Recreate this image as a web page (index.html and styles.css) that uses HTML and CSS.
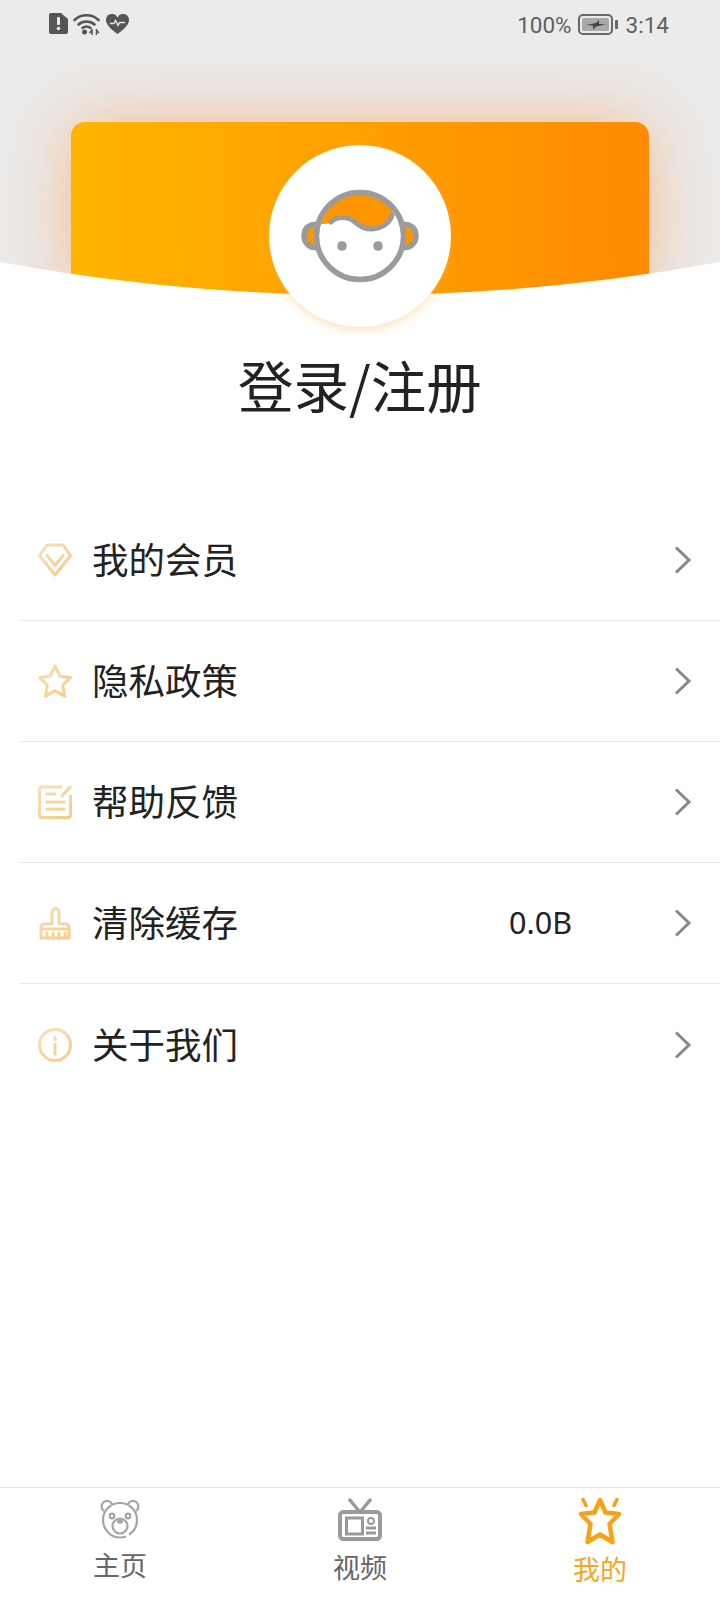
FILE: index.html
```html
<!DOCTYPE html>
<html lang="zh-CN">
<head>
    <meta charset="UTF-8">
    <meta name="viewport" content="width=device-width, initial-scale=1.0">
    <title>我的</title>
    <link rel="stylesheet" href="styles.css">
</head>
<body>
<svg class="defs"><defs><linearGradient id="gold" gradientUnits="userSpaceOnUse" x1="0" y1="0" x2="30" y2="34"><stop offset="0" stop-color="#f5e0bd"/><stop offset="1" stop-color="#f7cd85"/></linearGradient></defs></svg>
<div class="page">

    <div class="top">
        <div class="hero">
            <div class="status-bar">
                <div class="status-left">
                    <svg class="ic-sim" viewBox="0 0 19 21"><path d="M2 0h10l7 6v13a2 2 0 0 1-2 2H2a2 2 0 0 1-2-2V2a2 2 0 0 1 2-2z" fill="#555"/><rect x="8" y="4" width="3" height="8" rx="1" fill="#ebebeb"/><circle cx="9.5" cy="15.500" r="1.800" fill="#ebebeb"/></svg>
                    <svg class="ic-wifi" viewBox="0 0 27 22"><g fill="none" stroke="#555" stroke-width="2.600" stroke-linecap="round"><path d="M1.500 7C8 .6 19 .6 25.500 7"/><path d="M5.500 11.500c4.500-4 11.500-4 16 0"/><path d="M9.500 15c2.300-1.700 5.700-1.700 8 0"/></g><circle cx="11.500" cy="19" r="2.500" fill="#555"/><path d="M19 16v6M23.500 16v6M16.500 20l2.500-3M26 20l-2.500-3" stroke="#555" stroke-width="1.500" fill="none"/></svg>
                    <svg class="ic-heart" viewBox="0 0 23 20"><path d="M11.500 20C5 15 0 11 0 6a6 6 0 0 1 11.500-2.400A6 6 0 0 1 23 6c0 5-5 9-11.500 14z" fill="#555"/><path d="M4 9.500h4l1.500-3 2.500 5 1.500-3h5.500" fill="none" stroke="#ebebeb" stroke-width="1.300"/></svg>
                </div>
                <div class="status-right">
                    <span class="status-text">100%</span>
                    <svg class="ic-battery" viewBox="0 0 40 21"><rect x="1" y="1" width="33" height="19" rx="4" fill="none" stroke="#666" stroke-width="2"/><rect x="4" y="4" width="27" height="13" rx="1.500" fill="#a9a9a9"/><path d="M8 11l10-2 3-3v4l7 .5-10 2-3 3v-4z" fill="#444"/><rect x="37" y="6" width="3" height="9" rx="1" fill="#666"/></svg>
                    <span class="status-text">3:14</span>
                </div>
            </div>
            <div class="card"></div>
            <!-- white curve over the bottom of the card -->
            <svg class="hero-curve" viewBox="0 0 720 40" preserveAspectRatio="none"><path d="M0 2Q360 68 720 2V40H0z" fill="#fff"/></svg>
        </div>
        <div class="avatar">
            <svg class="ic-face" viewBox="0 0 120 100">
                <path d="M19 37a13 13 0 0 0 0 26z" fill="#ff9500"/>
                <path d="M101 37a13 13 0 0 1 0 26z" fill="#ff9500"/>
                <path d="M17 38.500c-9-1-13 5-13 11.500s5 12.500 13 11.500M103 38.500c9-1 13 5 13 11.500s-5 12.500-13 11.500" fill="none" stroke="#9b9b9b" stroke-width="5.500"/>
                <path d="M21 38C27 18 44 8 60 8c14 0 27 7 34 20-2 9-12 15-24 15-10 0-14-8-20-10-7-2-14-1-19 3-3 2-6 2-10 2z" fill="#ff9500"/>
                <circle cx="60" cy="50" r="43.500" fill="none" stroke="#9b9b9b" stroke-width="5.500"/>
                <path d="M31 36c5-5 13-5 19-3 6 2 10 10 20 10s20-5 22-14" fill="none" stroke="#9b9b9b" stroke-width="5" stroke-linecap="round"/>
                <circle cx="42" cy="60" r="4.800" fill="#9b9b9b"/>
                <circle cx="78" cy="60" r="4.800" fill="#9b9b9b"/>
            </svg>
        </div>
    </div>

    <h1 class="title">登录/注册</h1>

    <ul class="menu">
        <li class="menu-row">
            <svg class="menu-icon" viewBox="0 0 34 34" stroke="url(#gold)"><path d="M9 2h16l7.500 10.500L17 32 1.500 12.500z"/><path d="M9 12.500l8 10 8-10"/></svg>
            <span class="menu-label">我的会员</span>
            <svg class="chevron" viewBox="0 0 18 28"><path d="M2 1.500l13 12.500L2 26.500"/></svg>
        </li>
        <li class="menu-row">
            <svg class="menu-icon" viewBox="0 0 34 34" stroke="url(#gold)"><path d="M17 2l4.800 10.200 10.700 1.300-7.800 7.600 2 11L17 26.600 7.300 32.100l2-11-7.800-7.600 10.700-1.300z"/></svg>
            <span class="menu-label">隐私政策</span>
            <svg class="chevron" viewBox="0 0 18 28"><path d="M2 1.500l13 12.500L2 26.500"/></svg>
        </li>
        <li class="menu-row">
            <svg class="menu-icon" viewBox="0 0 34 34" stroke="url(#gold)"><path d="M23 2H3.500a2 2 0 0 0-2 2v26a2.500 2.500 0 0 0 2.500 2.500h26a2.500 2.500 0 0 0 2.500-2.500V11"/><path d="M9 9h8M9 17h17M9 24h17M32 2l-8 9"/></svg>
            <span class="menu-label">帮助反馈</span>
            <svg class="chevron" viewBox="0 0 18 28"><path d="M2 1.500l13 12.500L2 26.500"/></svg>
        </li>
        <li class="menu-row">
            <svg class="menu-icon" viewBox="0 0 34 34" stroke="url(#gold)"><path d="M3 32V21a3 3 0 0 1 3-3h6a2 2 0 0 0 2-2V6a3.500 3.500 0 0 1 7 0v10a2 2 0 0 0 2 2h5a3 3 0 0 1 3 3v11z"/><path d="M3 23h28M9 27v5M15 27v5M21 27v5M27 27v5"/></svg>
            <span class="menu-label">清除缓存</span>
            <span class="menu-value">0.0B</span>
            <svg class="chevron" viewBox="0 0 18 28"><path d="M2 1.500l13 12.500L2 26.500"/></svg>
        </li>
        <li class="menu-row">
            <svg class="menu-icon" viewBox="0 0 34 34" stroke="url(#gold)"><circle cx="17" cy="17" r="15.500"/><path d="M17 16v10M17 9.500v2"/></svg>
            <span class="menu-label">关于我们</span>
            <svg class="chevron" viewBox="0 0 18 28"><path d="M2 1.500l13 12.500L2 26.500"/></svg>
        </li>
    </ul>

    <nav class="tabbar">
        <div class="tab">
            <svg class="tab-icon bear" viewBox="0 0 40 40"><g fill="none" stroke="#a5a5a5" stroke-width="2.200"><path d="M4 12A5.500 5.500 0 1 1 12 5M36 12A5.500 5.500 0 1 0 28 5"/><path d="M29 35.500c5-3 8-8.500 8-14.500C37 11 29 4 20 4S3 11 3 21s8 17.500 17 17.500c2 0 4-.3 6-1"/><circle cx="12" cy="17" r="2.300"/><circle cx="28" cy="17" r="2.300"/><ellipse cx="20" cy="27" rx="7.500" ry="7.500"/></g><ellipse cx="20" cy="22.500" rx="3" ry="2.200" fill="#a5a5a5"/></svg>
            <span class="tab-label">主页</span>
        </div>
        <div class="tab">
            <svg class="tab-icon tv" viewBox="0 0 44 43"><path d="M11 1l10 12M33 1L23 13" fill="none" stroke="#9a9a9a" stroke-width="3.500"/><rect x="2" y="14" width="40" height="27" rx="3.500" fill="none" stroke="#9a9a9a" stroke-width="4"/><rect x="8.500" y="20" width="16" height="16" fill="none" stroke="#9a9a9a" stroke-width="3"/><circle cx="33" cy="23" r="3" fill="none" stroke="#9a9a9a" stroke-width="2"/><path d="M28 30h10M28 35h10" stroke="#9a9a9a" stroke-width="3"/></svg>
            <span class="tab-label">视频</span>
        </div>
        <div class="tab active">
            <svg class="tab-icon star" viewBox="0 0 44 48"><path d="M22 3l5.500 12.500 13.500 1.500-9.500 10 3 18L22 37.500 9.500 45l3-18L3 17l13.500-1.500z" fill="none" stroke="#f6a214" stroke-width="4.500" stroke-linejoin="round"/><path d="M5 2.500l3 6M39 2.500l-3 6" stroke="#f6a214" stroke-width="3.500" stroke-linecap="round"/></svg>
            <span class="tab-label">我的</span>
        </div>
    </nav>
</div>
</body>
</html>
```

FILE: styles.css
```css
* {
    box-sizing: border-box;
}

body {
    margin: 0;
    background-color: #fff;
    color: #222;
    font-family: "Noto Sans CJK SC", "Noto Sans", sans-serif;
}

.defs {
    position: absolute;
    width: 0;
    height: 0;
}

.page {
    display: flex;
    flex-direction: column;
    width: 720px;
    height: 1600px;
    overflow: hidden;
}

/* top area */
.top {
    position: relative;
    flex: none;
}

.hero {
    position: relative;
    display: flex;
    flex-direction: column;
    height: 300px;
    background-color: #ebebeb;
    overflow: hidden;
}

.status-bar {
    flex: none;
    display: flex;
    justify-content: space-between;
    align-items: flex-start;
    height: 122px;
    padding: 13px 51px 0 49px;
}

.status-left, .status-right {
    display: flex;
    align-items: flex-start;
}

.ic-sim {
    width: 19px;
    height: 21px;
    margin-right: 5px;
}

.ic-wifi {
    width: 27px;
    height: 22px;
    margin-right: 6px;
}

.ic-heart {
    width: 23px;
    height: 20px;
    margin-top: 1px;
}

.status-text {
    font-family: Roboto, sans-serif;
    font-size: 22.5px;
    line-height: 24px;
    color: #5f5f5f;
}

.ic-battery {
    width: 40px;
    height: 21px;
    margin: 1px 8px 0 6px;
}

.card {
    flex: 1;
    margin: 0 71px;
    border-radius: 14px 14px 0 0;
    background: linear-gradient(90deg, #ffb500, #ff8a00);
    box-shadow: 0 0 70px rgba(255, 125, 20, 0.42);
}

.hero-curve {
    position: absolute;
    left: 0;
    bottom: 0;
    width: 720px;
    height: 40px;
}

.avatar {
    position: absolute;
    left: 269px;
    top: 145px;
    display: flex;
    justify-content: center;
    align-items: center;
    width: 182px;
    height: 182px;
    border-radius: 50%;
    background-color: #fff;
    box-shadow: 0 3px 8px rgba(255, 170, 60, 0.35);
}

.ic-face {
    width: 120px;
    height: 100px;
}

.title {
    margin: 43px 0 0;
    font-size: 55.5px;
    font-weight: 400;
    line-height: 82px;
    text-align: center;
}

/* list */
.menu {
    list-style: none;
    margin: 75px 0 0 20px;
    padding: 0;
}

.menu-row {
    display: flex;
    align-items: center;
    height: 121px;
    padding: 0 28px 0 18px;
    border-bottom: 1px solid #e9e9e9;
}

.menu-row:last-child {
    border-bottom: none;
}

.menu-icon {
    flex: none;
    width: 34px;
    height: 34px;
    margin-right: 20px;
    fill: none;
    stroke-width: 3;
    stroke-linejoin: round;
    stroke-linecap: round;
}

.menu-label {
    flex: 1;
    margin-bottom: 2px;
    font-size: 36.5px;
    line-height: 50px;
}

.menu-value {
    margin-right: 102px;
    margin-bottom: 2px;
    font-size: 30.5px;
    font-family: "Noto Sans", sans-serif;
}

.chevron {
    flex: none;
    width: 18px;
    height: 28px;
    fill: none;
    stroke: #888;
    stroke-width: 3;
}

/* bottom tabs */
.tabbar {
    flex: none;
    display: grid;
    grid-template-columns: repeat(3, 1fr);
    height: 113px;
    margin-top: auto;
    border-top: 1px solid #e5e5e5;
}

.tab {
    display: flex;
    flex-direction: column;
    align-items: center;
    padding-top: 10px;
}

.tab-icon {
    flex: none;
}

.tab-icon.bear {
    width: 40px;
    height: 40px;
    margin-top: 1px;
}

.tab-icon.tv {
    width: 44px;
    height: 43px;
}

.tab-icon.star {
    width: 44px;
    height: 48px;
    margin-top: -1px;
}

.tab-label {
    margin-top: 7px;
    font-size: 27px;
    line-height: 38px;
    color: #666;
}

.tab.active .tab-label {
    margin-top: 5px;
    color: #f5a623;
}
```
